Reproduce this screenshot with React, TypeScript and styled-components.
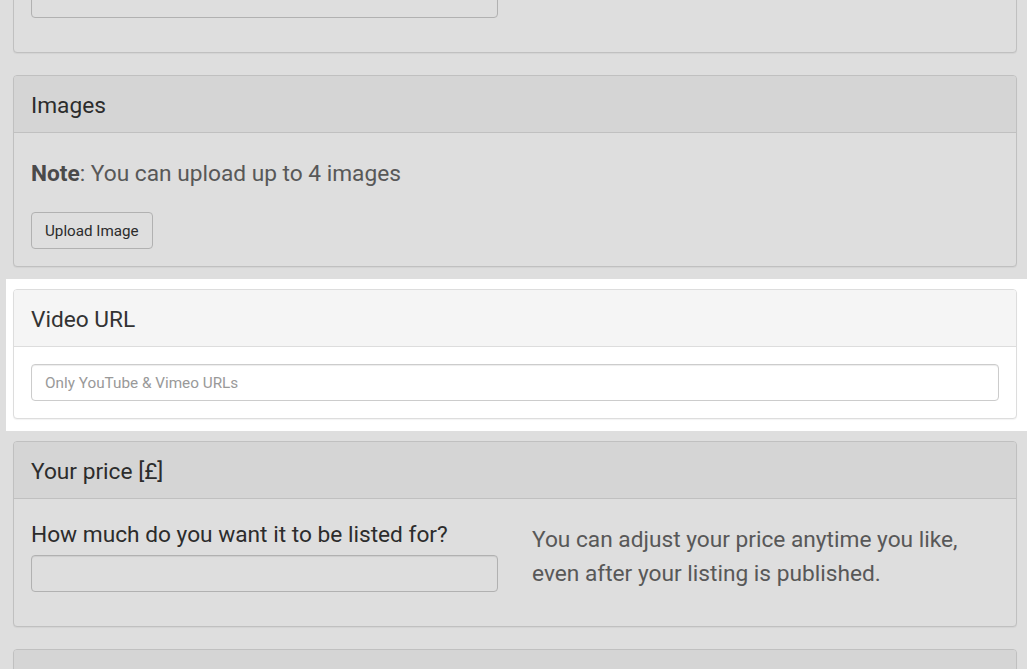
import React from 'react'
import styled, { createGlobalStyle } from 'styled-components'

const GlobalStyle = createGlobalStyle`
  html, body {
    margin: 0;
    padding: 0;
    background: #fff;
    font-family: Roboto, 'Noto Sans', 'Liberation Sans', sans-serif;
    color: #333;
    overflow: hidden;
  }

  * {
    box-sizing: border-box;
  }
`

const Page = styled.div`
  padding: 0 10px 0 13px;
  margin-top: -37px;
`

const Overlay = styled.div`
  position: fixed;
  inset: 0;
  background: rgba(0, 0, 0, 0.13);
  z-index: 10;
`

const Spotlight = styled.div`
  position: relative;
  z-index: 11;
  background: #fff;
  margin: -10px -10px 10px -7px;
  padding: 10px 10px 12px 7px;

  & > section {
    margin-bottom: 0;
  }
`

const Panel = styled.section`
  background: #fff;
  border: 1px solid #ddd;
  border-radius: 4px;
  margin-bottom: 22px;
  box-shadow: 0 1px 1px rgba(0, 0, 0, 0.05);
`

const PanelHeading = styled.header`
  min-height: 57px;
  background: #f5f5f5;
  border-bottom: 1px solid #ddd;
  border-radius: 3px 3px 0 0;
  padding: 18px 17px 14px;
`

const PanelTitle = styled.h3`
  margin: 0;
  font-size: 22.7px;
  font-weight: 400;
  line-height: 24px;
  color: #333;
`

const PanelBody = styled.div`
  padding: 17px;
`

const Note = styled.p`
  margin: 7px 0 21px;
  font-size: 22.7px;
  line-height: 34px;
  color: #666;

  strong {
    font-weight: 700;
    color: #555;
  }
`

const Button = styled.button`
  display: inline-block;
  height: 37px;
  padding: 1px 13px 0;
  font-family: inherit;
  font-size: 15.2px;
  color: #333;
  background: #fff;
  border: 1px solid #ccc;
  border-radius: 4px;
  cursor: pointer;
`

const Input = styled.input`
  display: block;
  width: 100%;
  height: 37px;
  padding: 1px 13px 0;
  font-family: inherit;
  font-size: 15.3px;
  color: #555;
  background: #fff;
  border: 1px solid #ccc;
  border-radius: 4px;
  box-shadow: inset 0 1px 1px rgba(0, 0, 0, 0.075);
  outline: none;

  &::placeholder {
    color: #999;
  }
`

const Row = styled.div`
  display: grid;
  grid-template-columns: 1fr 1fr;
  column-gap: 34px;
`

const FormGroup = styled.div`
  margin-bottom: 17px;
`

const Label = styled.label`
  display: block;
  margin: 2px 0 3px;
  font-size: 22.7px;
  line-height: 34px;
  color: #333;
`

const Hint = styled.p`
  margin: 7px 0 0;
  font-size: 22.7px;
  line-height: 34px;
  color: #666;
`

type FieldProps = {
    label?: string
}

const Field = ({ label }: FieldProps) => (
    <FormGroup>
        {label && <Label>{label}</Label>}
        <Input type='text' />
    </FormGroup>
)

const App = () => {
    return (
        <>
            <GlobalStyle />
            <Overlay />
            <Page>
                <Panel>
                    <PanelBody>
                        <Row>
                            <Field />
                        </Row>
                    </PanelBody>
                </Panel>

                <Panel>
                    <PanelHeading>
                        <PanelTitle>Images</PanelTitle>
                    </PanelHeading>
                    <PanelBody>
                        <Note>
                            <strong>Note</strong>: You can upload up to 4 images
                        </Note>
                        <Button type='button'>Upload Image</Button>
                    </PanelBody>
                </Panel>

                <Spotlight>
                    <Panel>
                        <PanelHeading>
                            <PanelTitle>Video URL</PanelTitle>
                        </PanelHeading>
                        <PanelBody>
                            <Input type='text' placeholder='Only YouTube & Vimeo URLs' />
                        </PanelBody>
                    </Panel>
                </Spotlight>

                <Panel>
                    <PanelHeading>
                        <PanelTitle>Your price [£]</PanelTitle>
                    </PanelHeading>
                    <PanelBody>
                        <Row>
                            <Field label='How much do you want it to be listed for?' />
                            <Hint>
                                You can adjust your price anytime you like, even after your listing is published.
                            </Hint>
                        </Row>
                    </PanelBody>
                </Panel>

                <Panel>
                    <PanelHeading />
                    <PanelBody />
                </Panel>
            </Page>
        </>
    )
}

export default App
